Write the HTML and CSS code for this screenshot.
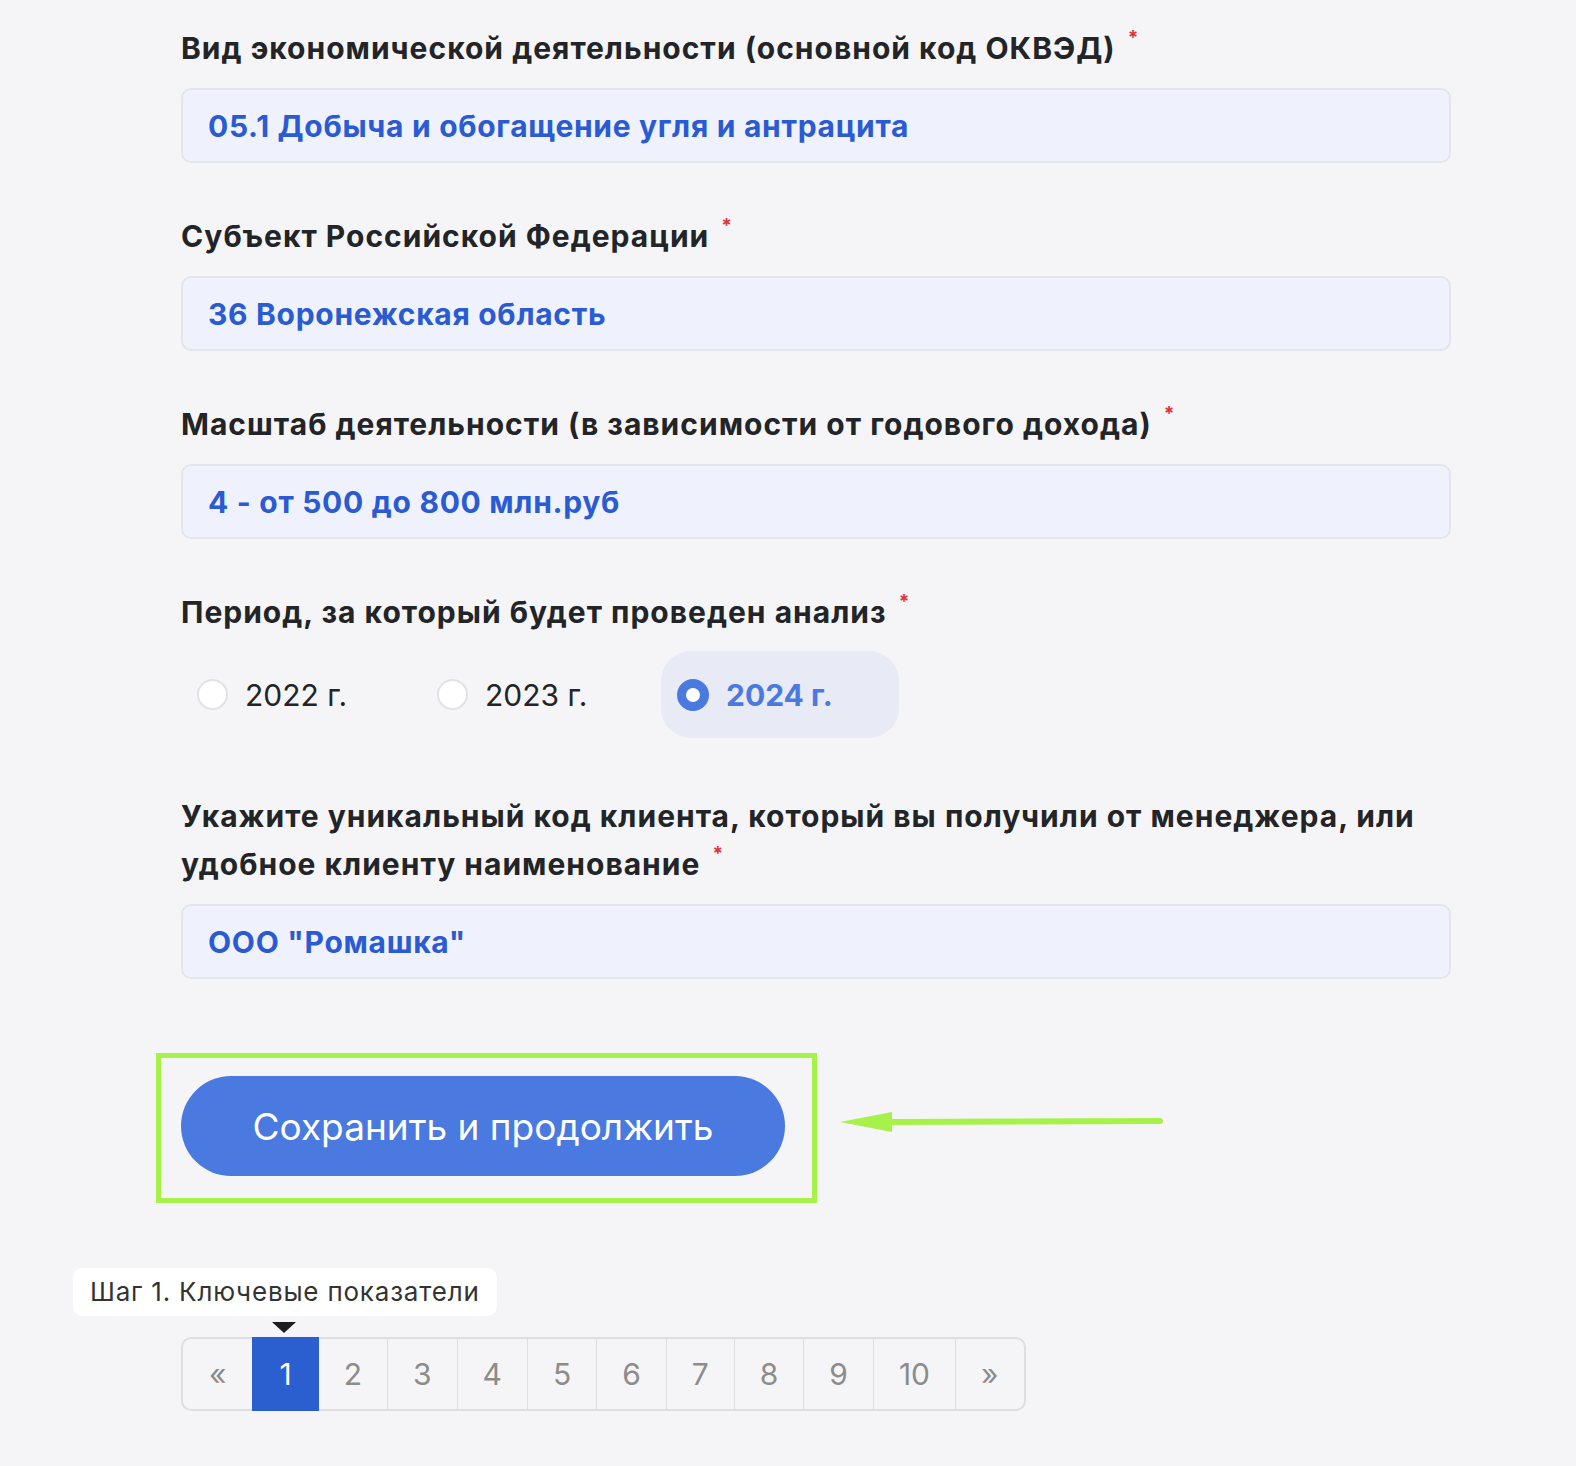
FILE: index.html
```html
<!DOCTYPE html>
<html lang="ru">
<head>
  <meta charset="UTF-8">
  <meta name="viewport" content="width=device-width, initial-scale=1.0">
  <title>Анкета - Шаг 1</title>
  <link rel="stylesheet" href="styles.css">
</head>
<body>
<main class="page">
  <form class="form" onsubmit="return false;">
    <div class="field">
      <label class="field-label" for="okved">Вид экономической деятельности (основной код ОКВЭД) <span class="req">*</span></label>
      <input class="field-input" id="okved" type="text" value="05.1 Добыча и обогащение угля и антрацита" readonly>
    </div>

    <div class="field">
      <label class="field-label" for="region">Субъект Российской Федерации <span class="req">*</span></label>
      <input class="field-input" id="region" type="text" value="36 Воронежская область" readonly>
    </div>

    <div class="field">
      <label class="field-label" for="scale">Масштаб деятельности (в зависимости от годового дохода) <span class="req">*</span></label>
      <input class="field-input" id="scale" type="text" value="4 - от 500 до 800 млн.руб" readonly>
    </div>

    <div class="field field-radio">
      <div class="field-label">Период, за который будет проведен анализ <span class="req">*</span></div>
      <div class="radio-group">
        <label class="radio-option"><span class="radio"></span>2022 г.</label>
        <label class="radio-option"><span class="radio"></span>2023 г.</label>
        <label class="radio-option checked"><span class="radio"></span>2024 г.</label>
      </div>
    </div>

    <div class="field">
      <label class="field-label" for="client">Укажите уникальный код клиента, который вы получили от менеджера, или удобное клиенту наименование <span class="req">*</span></label>
      <input class="field-input" id="client" type="text" value='ООО "Ромашка"' readonly>
    </div>

    <div class="actions">
      <div class="highlight">
        <button class="btn-primary" type="submit">Сохранить и продолжить</button>
      </div>
      <svg class="arrow" width="325" height="24" viewBox="0 0 325 24">
        <line x1="50" y1="11" x2="320" y2="10" stroke="#a6f24a" stroke-width="6" stroke-linecap="round"/>
        <polygon points="0,11 52,1 52,21" fill="#a6f24a"/>
      </svg>
    </div>

    <div class="steps">
      <div class="step-tooltip">Шаг 1. Ключевые показатели</div>
      <span class="step-pointer"></span>
      <nav class="pager">
        <a href="#" class="pager-item">«</a>
        <a href="#" class="pager-item active">1</a>
        <a href="#" class="pager-item">2</a>
        <a href="#" class="pager-item">3</a>
        <a href="#" class="pager-item">4</a>
        <a href="#" class="pager-item">5</a>
        <a href="#" class="pager-item">6</a>
        <a href="#" class="pager-item">7</a>
        <a href="#" class="pager-item">8</a>
        <a href="#" class="pager-item">9</a>
        <a href="#" class="pager-item">10</a>
        <a href="#" class="pager-item">»</a>
      </nav>
    </div>
  </form>
</main>
</body>
</html>
```

FILE: styles.css
```css
* {
    margin: 0;
    padding: 0;
    box-sizing: border-box;
    font-family: 'Inter', 'Noto Sans', sans-serif;
}

body {
    background-color: #f5f5f7;
    color: #222428;
}

.page {
    padding: 24px 0 60px 181px;
}

.form {
    width: 1270px;
}

.field {
    margin-bottom: 49px;
}

.field-label {
    display: block;
    font-size: 30px;
    font-weight: 700;
    line-height: 48px;
    letter-spacing: 1px;
    color: #222428;
    margin-bottom: 16px;
}

.req {
    display: inline-block;
    vertical-align: top;
    margin-left: 4px;
    font-size: 19px;
    line-height: 28px;
    color: #e0323c;
}

.field-input {
    display: block;
    width: 100%;
    height: 75px;
    padding: 0 25px;
    border: 2px solid #e4e5ea;
    border-radius: 10px;
    background-color: #eff2fc;
    font-size: 30px;
    font-weight: 700;
    letter-spacing: 0.7px;
    color: #2b5bd3;
    outline: none;
}

.field-radio {
    margin-bottom: 54px;
}

.field-radio .field-label {
    margin-bottom: 15px;
}

.radio-group {
    display: flex;
    gap: 2px;
}

.radio-option {
    display: flex;
    align-items: center;
    gap: 17px;
    width: 238px;
    height: 87px;
    padding: 0 16px;
    border-radius: 30px;
    font-size: 30px;
    color: #222428;
    cursor: pointer;
}

.radio {
    flex: 0 0 auto;
    width: 31px;
    height: 31px;
    border-radius: 50%;
    background-color: #fff;
    border: 2px solid #e0e2e6;
}

.radio-option.checked {
    background-color: #e8eaf6;
    color: #4a79e0;
    font-weight: 700;
}

.radio-option.checked .radio {
    width: 32px;
    height: 32px;
    border: 9px solid #4a79e0;
}

.actions {
    display: flex;
    align-items: center;
    margin-top: 74px;
}

.highlight {
    margin-left: -25px;
    padding: 18px 27px 22px 20px;
    border: 5px solid #a6f24a;
}

.btn-primary {
    display: block;
    width: 604px;
    height: 100px;
    border: none;
    border-radius: 50px;
    background-color: #4a79e0;
    color: #fff;
    font-size: 37px;
    font-weight: 400;
    cursor: pointer;
}

.arrow {
    margin-left: 23px;
    margin-bottom: 10px;
}

.steps {
    position: relative;
    margin-top: 134px;
}

.step-tooltip {
    position: absolute;
    left: -108px;
    top: -69px;
    height: 48px;
    padding: 0 17px;
    border-radius: 10px;
    background-color: #fff;
    font-size: 26px;
    line-height: 48px;
    letter-spacing: 0.8px;
    color: #333;
    white-space: nowrap;
}

.step-pointer {
    position: absolute;
    left: 91px;
    top: -15px;
    width: 0;
    height: 0;
    border-left: 12px solid transparent;
    border-right: 12px solid transparent;
    border-top: 11px solid #1d1d1d;
}

.pager {
    display: inline-flex;
    height: 74px;
    border: 2px solid #dcdee3;
    border-radius: 10px;
}

.pager-item {
    display: flex;
    align-items: center;
    padding: 0 25px;
    border-left: 1px solid #dcdee3;
    font-size: 30px;
    color: #8c8c8c;
    text-decoration: none;
}

.pager-item:first-child {
    border-left: none;
    padding: 0 26px;
}

.pager-item.active {
    margin: -2px 0;
    padding: 0 27px;
    border-left: none;
    background-color: #2b5fd0;
    color: #fff;
}

.pager-item.active + .pager-item {
    border-left: none;
}
```
